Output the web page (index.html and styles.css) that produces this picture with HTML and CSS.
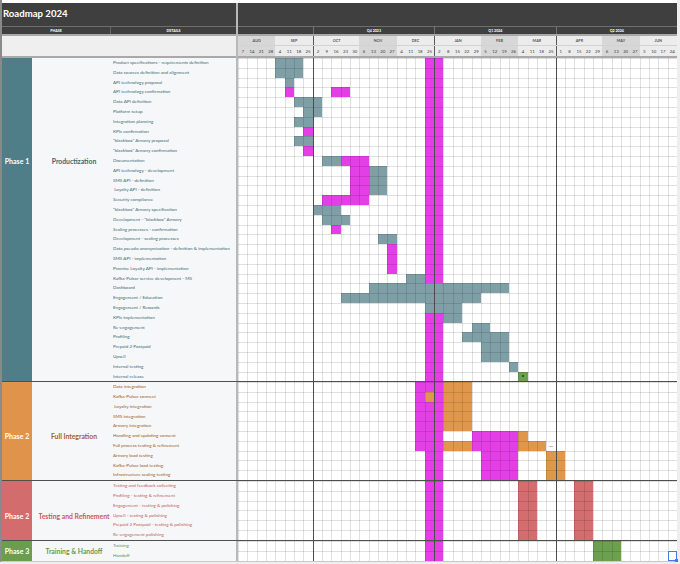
FILE: index.html
```html
<!DOCTYPE html>
<html lang="en">
<head>
<meta charset="utf-8">
<title>Roadmap 2024</title>
<link rel="stylesheet" href="styles.css">
</head>
<body>
<div class="sheet">
  <div class="strip"></div>
  <header class="head">
    <div class="head-left">
      <div class="title">Roadmap 2024</div>
      <div class="colnames"><span class="cn-phase">PHASE</span><span class="cn-details">DETAILS</span></div>
      <div class="blank"></div>
    </div>
    <div class="head-right">
      <div class="title-fill"></div>
      <div class="quarters">
        <span class="qt s8"></span><span class="qt s13 qs">Q4 2023</span><span class="qt s13 qs">Q1 2024</span><span class="qt s13 qs">Q2 2024</span>
      </div>
      <div class="months">
        <span class="mo s4 dk">AUG</span><span class="mo s4">SEP</span><span class="mo s5 qs">OCT</span><span class="mo s4 dk">NOV</span><span class="mo s4">DEC</span><span class="mo s5 qs">JAN</span><span class="mo s4 dk">FEB</span><span class="mo s4">MAR</span><span class="mo s5 qs">APR</span><span class="mo s4 dk">MAY</span><span class="mo s4">JUN</span>
      </div>
      <div class="dates">
        <span class="dk">7</span><span class="dk">14</span><span class="dk">21</span><span class="dk">28</span>
        <span>4</span><span>11</span><span>18</span><span>25</span>
        <span class="qs">2</span><span>9</span><span>16</span><span>23</span><span>30</span>
        <span class="dk">6</span><span class="dk">13</span><span class="dk">20</span><span class="dk">27</span>
        <span>4</span><span>11</span><span>18</span><span>25</span>
        <span class="qs">2</span><span>8</span><span>15</span><span>22</span><span>29</span>
        <span class="dk">5</span><span class="dk">12</span><span class="dk">19</span><span class="dk">26</span>
        <span>4</span><span>11</span><span>18</span><span>25</span>
        <span class="qs">1</span><span>8</span><span>15</span><span>22</span><span>29</span>
        <span class="dk">6</span><span class="dk">13</span><span class="dk">20</span><span class="dk">27</span>
        <span>3</span><span>10</span><span>17</span><span>24</span>
      </div>
    </div>
  </header>

  <section class="phase p1">
    <div class="ph-cell">Phase 1</div>
    <div class="ph-name">Productization</div>
    <ul class="details">
      <li>Product specifications - requirements definition</li>
      <li>Data sources definition and alignment</li>
      <li>API technology proposal</li>
      <li>API technology confirmation</li>
      <li>Data API definition</li>
      <li>Platform setup</li>
      <li>Integration planning</li>
      <li>KPIs confirmation</li>
      <li>"blackbox" Armory proposal</li>
      <li>"blackbox" Armory confirmation</li>
      <li>Documentation</li>
      <li>API technology - development</li>
      <li>SMS API - definition</li>
      <li> Loyalty API - definition</li>
      <li>Security compliance</li>
      <li>"blackbox" Armory specification</li>
      <li>Development - "blackbox" Armory</li>
      <li>Scaling processes - confirmation</li>
      <li>Development - scaling processes</li>
      <li>Data pseudo anonymization - definition &amp; implementation</li>
      <li>SMS API - implementation</li>
      <li>Promise Loyalty API - implementation</li>
      <li>Kafka-Pulsar service development - MS</li>
      <li>Dashboard</li>
      <li>Engagement / Education</li>
      <li>Engagement / Rewards</li>
      <li>KPIs implementation</li>
      <li>Re-engagement</li>
      <li>Profiling</li>
      <li>Prepaid 2 Postpaid</li>
      <li>Upsell</li>
      <li>Internal testing</li>
      <li>Internal release</li>
    </ul>
    <div class="chart">
      <i class="b m" style="grid-area:1/21/-1/23"></i>
      <i class="b g" style="grid-area:1/5/3/8"></i>
      <i class="b g" style="grid-area:3/6/4/7"></i>
      <i class="b m" style="grid-area:4/6/5/7"></i>
      <i class="b m" style="grid-area:4/11/5/13"></i>
      <i class="b g" style="grid-area:5/7/6/10"></i>
      <i class="b g" style="grid-area:6/8/7/10"></i>
      <i class="b g" style="grid-area:7/7/8/9"></i>
      <i class="b m" style="grid-area:8/8/9/9"></i>
      <i class="b g" style="grid-area:9/7/10/9"></i>
      <i class="b m" style="grid-area:10/8/11/9"></i>
      <i class="b g" style="grid-area:11/10/12/12"></i>
      <i class="b m" style="grid-area:11/12/12/15"></i>
      <i class="b m" style="grid-area:12/13/15/15"></i>
      <i class="b g" style="grid-area:12/15/15/17"></i>
      <i class="b m" style="grid-area:15/10/16/15"></i>
      <i class="b g" style="grid-area:16/9/17/12"></i>
      <i class="b g" style="grid-area:17/10/18/13"></i>
      <i class="b m" style="grid-area:18/11/19/12"></i>
      <i class="b g" style="grid-area:19/16/20/18"></i>
      <i class="b m" style="grid-area:20/17/23/18"></i>
      <i class="b g" style="grid-area:23/19/24/21"></i>
      <i class="b g" style="grid-area:24/15/25/30"></i>
      <i class="b g" style="grid-area:25/12/26/27"></i>
      <i class="b g" style="grid-area:26/21/27/25"></i>
      <i class="b g" style="grid-area:27/23/28/25"></i>
      <i class="b g" style="grid-area:28/26/29/28"></i>
      <i class="b g" style="grid-area:29/25/30/30"></i>
      <i class="b g" style="grid-area:30/27/32/30"></i>
      <i class="b g" style="grid-area:32/30/33/31"></i>
      <i class="b gr milestone" style="grid-area:33/31/34/32"></i>
      <i class="ql qa"></i><i class="ql qb"></i><i class="ql qc"></i>
    </div>
  </section>

  <section class="phase p2">
    <div class="ph-cell">Phase 2</div>
    <div class="ph-name">Full Integration</div>
    <ul class="details">
      <li>Data integration</li>
      <li>Kafka-Pulsar connect</li>
      <li> Loyalty integration</li>
      <li>SMS integration</li>
      <li>Armory integration</li>
      <li>Handling and updating consent</li>
      <li>Full process testing &amp; refinement</li>
      <li>Armory load testing</li>
      <li>Kafka-Pulsar load testing</li>
      <li>Infrastructure scaling testing</li>
    </ul>
    <div class="chart">
      <i class="b m" style="grid-area:1/21/-1/23"></i>
      <i class="b m" style="grid-area:1/20/8/21"></i>
      <i class="b o" style="grid-area:2/21/3/22"></i>
      <i class="b o" style="grid-area:1/23/6/26"></i>
      <i class="b m" style="grid-area:6/26/8/31"></i>
      <i class="b o" style="grid-area:6/31/7/32"></i>
      <i class="b o" style="grid-area:7/23/8/26"></i>
      <i class="b o" style="grid-area:7/31/8/34"></i>
      <span class="note" style="grid-area:7/34/8/35">(ms)</span>
      <i class="b m" style="grid-area:8/27/11/31"></i>
      <i class="b o" style="grid-area:8/34/11/36"></i>
      <i class="ql qa"></i><i class="ql qb"></i><i class="ql qc"></i>
    </div>
  </section>

  <section class="phase p3">
    <div class="ph-cell">Phase 2</div>
    <div class="ph-name">Testing and Refinement</div>
    <ul class="details">
      <li>Testing and feedback collecting</li>
      <li>Profiling - testing &amp; refinement</li>
      <li>Engagement - testing &amp; polishing</li>
      <li>Upsell - testing &amp; polishing</li>
      <li>Prepaid 2 Postpaid - testing &amp; polishing</li>
      <li>Re-engagement polishing</li>
    </ul>
    <div class="chart">
      <i class="b m" style="grid-area:1/21/-1/23"></i>
      <i class="b r" style="grid-area:1/31/-1/33"></i>
      <i class="b r" style="grid-area:1/37/-1/39"></i>
      <i class="ql qa"></i><i class="ql qb"></i><i class="ql qc"></i>
    </div>
  </section>

  <section class="phase p4">
    <div class="ph-cell">Phase 3</div>
    <div class="ph-name">Training &amp; Handoff</div>
    <ul class="details">
      <li>Training</li>
      <li>Handoff</li>
    </ul>
    <div class="chart">
      <i class="b m" style="grid-area:1/21/-1/23"></i>
      <i class="b gr" style="grid-area:1/39/-1/42"></i>
      <i class="ql qa"></i><i class="ql qb"></i><i class="ql qc"></i>
      <i class="sel"></i>
    </div>
  </section>
</div>
</body>
</html>
```

FILE: styles.css
```css
* { box-sizing: border-box; margin: 0; padding: 0; }

html, body { background: #eeeeee; }

body {
  width: 680px;
  height: 564px;
  overflow: hidden;
  font-family: Lato, "Open Sans", "Liberation Sans", sans-serif;
}

.sheet {
  width: 677px;
  background: #ffffff;
  border-left: 2px solid #8a8a8a;
  border-bottom: 1px solid #c9c9c9;
}

.strip {
  height: 3px;
  background: #ffffff;
}

/* ---------- header ---------- */
.head { display: flex; }

.head-left {
  width: 236px;
  display: flex;
  flex-direction: column;
  border-right: 2px solid #b9b9b9;
}

.title {
  height: 24px;
  background: #3f3f3f;
  color: #ffffff;
  font-weight: 700;
  font-size: 9.6px;
  line-height: 22px;
  padding-left: 1px;
  border-bottom: 1px solid #6e6e6e;
}

.colnames {
  height: 9px;
  display: flex;
  background: #3f3f3f;
  color: #ffffff;
  font-size: 3.6px;
  font-weight: 700;
  border-bottom: 2px solid #a8a8a8;
}
.colnames span { display: flex; align-items: center; justify-content: center; }
.cn-phase { width: 108px; }
.cn-details { flex: 1; border-left: 1px solid #666; }

.blank {
  height: 22px;
  background: #efefef;
  border-bottom: 2px solid #a9a9a9;
}

.head-right {
  width: 439px;
  display: flex;
  flex-direction: column;
}

.title-fill {
  height: 24px;
  background: #3f3f3f;
  border-bottom: 1px solid #6e6e6e;
}

.quarters, .months, .dates {
  display: grid;
  grid-template-columns: repeat(47, 1fr);
}

.quarters {
  height: 9px;
  background: #3f3f3f;
  border-bottom: 2px solid #a8a8a8;
}
.qt {
  color: #ffffff;
  font-size: 3.6px;
  font-weight: 700;
  display: flex;
  align-items: center;
  justify-content: center;
}
.qt.qs { border-left: 1px solid #707070; }
.s4 { grid-column: span 4; }
.s5 { grid-column: span 5; }
.s8 { grid-column: span 8; }
.s13 { grid-column: span 13; }

.months {
  height: 10px;
  border-bottom: 1px solid #d2d2d2;
}
.mo {
  background: #ececec;
  color: #555555;
  font-size: 3.8px;
  font-weight: 700;
  display: flex;
  align-items: center;
  justify-content: center;
}
.mo.dk { background: #d7d7d7; }

.dates {
  height: 12px;
  border-bottom: 2px solid #a9a9a9;
}
.dates span {
  background: #ececec;
  color: #3c3c3c;
  font-size: 4.3px;
  display: flex;
  align-items: center;
  justify-content: center;
}
.dates span.dk { background: #d7d7d7; }

.months .qs, .dates .qs { border-left: 1px solid #5a5a5a; }

/* ---------- phases ---------- */
.phase {
  display: flex;
  border-top: 1px solid #4f4f4f;
}
.p1 { border-top: 0; }

.ph-cell {
  width: 30px;
  flex-shrink: 0;
  display: flex;
  align-items: center;
  justify-content: center;
  color: #ffffff;
  font-size: 7px;
  font-weight: 700;
}

.ph-name {
  width: 78px;
  flex-shrink: 0;
  display: flex;
  align-items: center;
  justify-content: center;
  padding-left: 6px;
  background: #f6f7f8;
  font-size: 6.8px;
  font-weight: 700;
  white-space: nowrap;
}

.details {
  width: 128px;
  flex-shrink: 0;
  list-style: none;
  background: #f6f7f8;
  border-right: 2px solid #b9b9b9;
  padding-left: 3px;
}
.details li {
  height: 9.8px;
  line-height: 9.8px;
  font-size: 4.6px;
  white-space: pre;
  overflow: hidden;
}

.chart {
  position: relative;
  width: 439px;
  flex-shrink: 0;
  display: grid;
  grid-template-columns: repeat(47, 1fr);
  background: #ffffff;
}
.chart::after {
  content: "";
  position: absolute;
  inset: 0;
  pointer-events: none;
  z-index: 3;
  background-image:
    repeating-linear-gradient(90deg, rgba(0,0,0,0.12) 0 1px, transparent 1px 9.3404px),
    repeating-linear-gradient(180deg, rgba(0,0,0,0.12) 0 1px, transparent 1px 9.8px);
}

.p1 .chart { grid-template-rows: repeat(33, 9.8px); }
.p2 .chart { grid-template-rows: repeat(10, 9.8px); }
.p3 .chart { grid-template-rows: repeat(6, 9.8px); }
.p4 .chart { grid-template-rows: repeat(2, 9.8px); }

/* phase colours */
.p1 .ph-cell { background: #4f7e88; padding-bottom: 117px; }
.p1 .ph-name { color: #3d6770; padding-bottom: 117px; }
.p1 .details li { color: #3b6a74; }

.p2 .ph-cell { background: #e0944b; }
.p2 .ph-name { color: #a4602a; }
.p2 .details li { color: #9a5924; }
.p2 .ph-cell, .p2 .ph-name { padding-top: 10px; }

.p3 .ph-cell { background: #d26c6d; }
.p3 .ph-name { color: #c65a5c; }
.p3 .details li { color: #c35a5c; }
.p3 .ph-cell, .p3 .ph-name { padding-top: 10px; }

.p4 .ph-cell { background: #6b9d4f; }
.p4 .ph-name { color: #679a49; }
.p4 .details li { color: #5f933d; }

/* bars */
.b { display: block; }
.g { background: #7f9fa7; }
.m { background: #e43fe6; }
.o { background: #e0974c; }
.r { background: #d36d6e; }
.gr { background: #6c9f4f; }

.milestone { display: flex; align-items: center; justify-content: center; }
.milestone::before {
  content: "";
  width: 2px;
  height: 2px;
  background: #2d5a1e;
}

.note {
  font-size: 2.6px;
  color: #6b6b6b;
  display: flex;
  align-items: center;
  justify-content: center;
  z-index: 4;
}

.ql {
  grid-row: 1 / -1;
  border-left: 1px solid #595959;
  z-index: 2;
}
.qa { grid-column: 9; }
.qb { grid-column: 22; }
.qc { grid-column: 35; }

.sel {
  grid-area: 2 / 47 / 3 / 48;
  position: relative;
  border: 1px solid #3f7be0;
  z-index: 5;
}
.sel::after {
  content: "";
  position: absolute;
  right: -2px;
  bottom: -2px;
  width: 3px;
  height: 3px;
  background: #3f7be0;
}
```
